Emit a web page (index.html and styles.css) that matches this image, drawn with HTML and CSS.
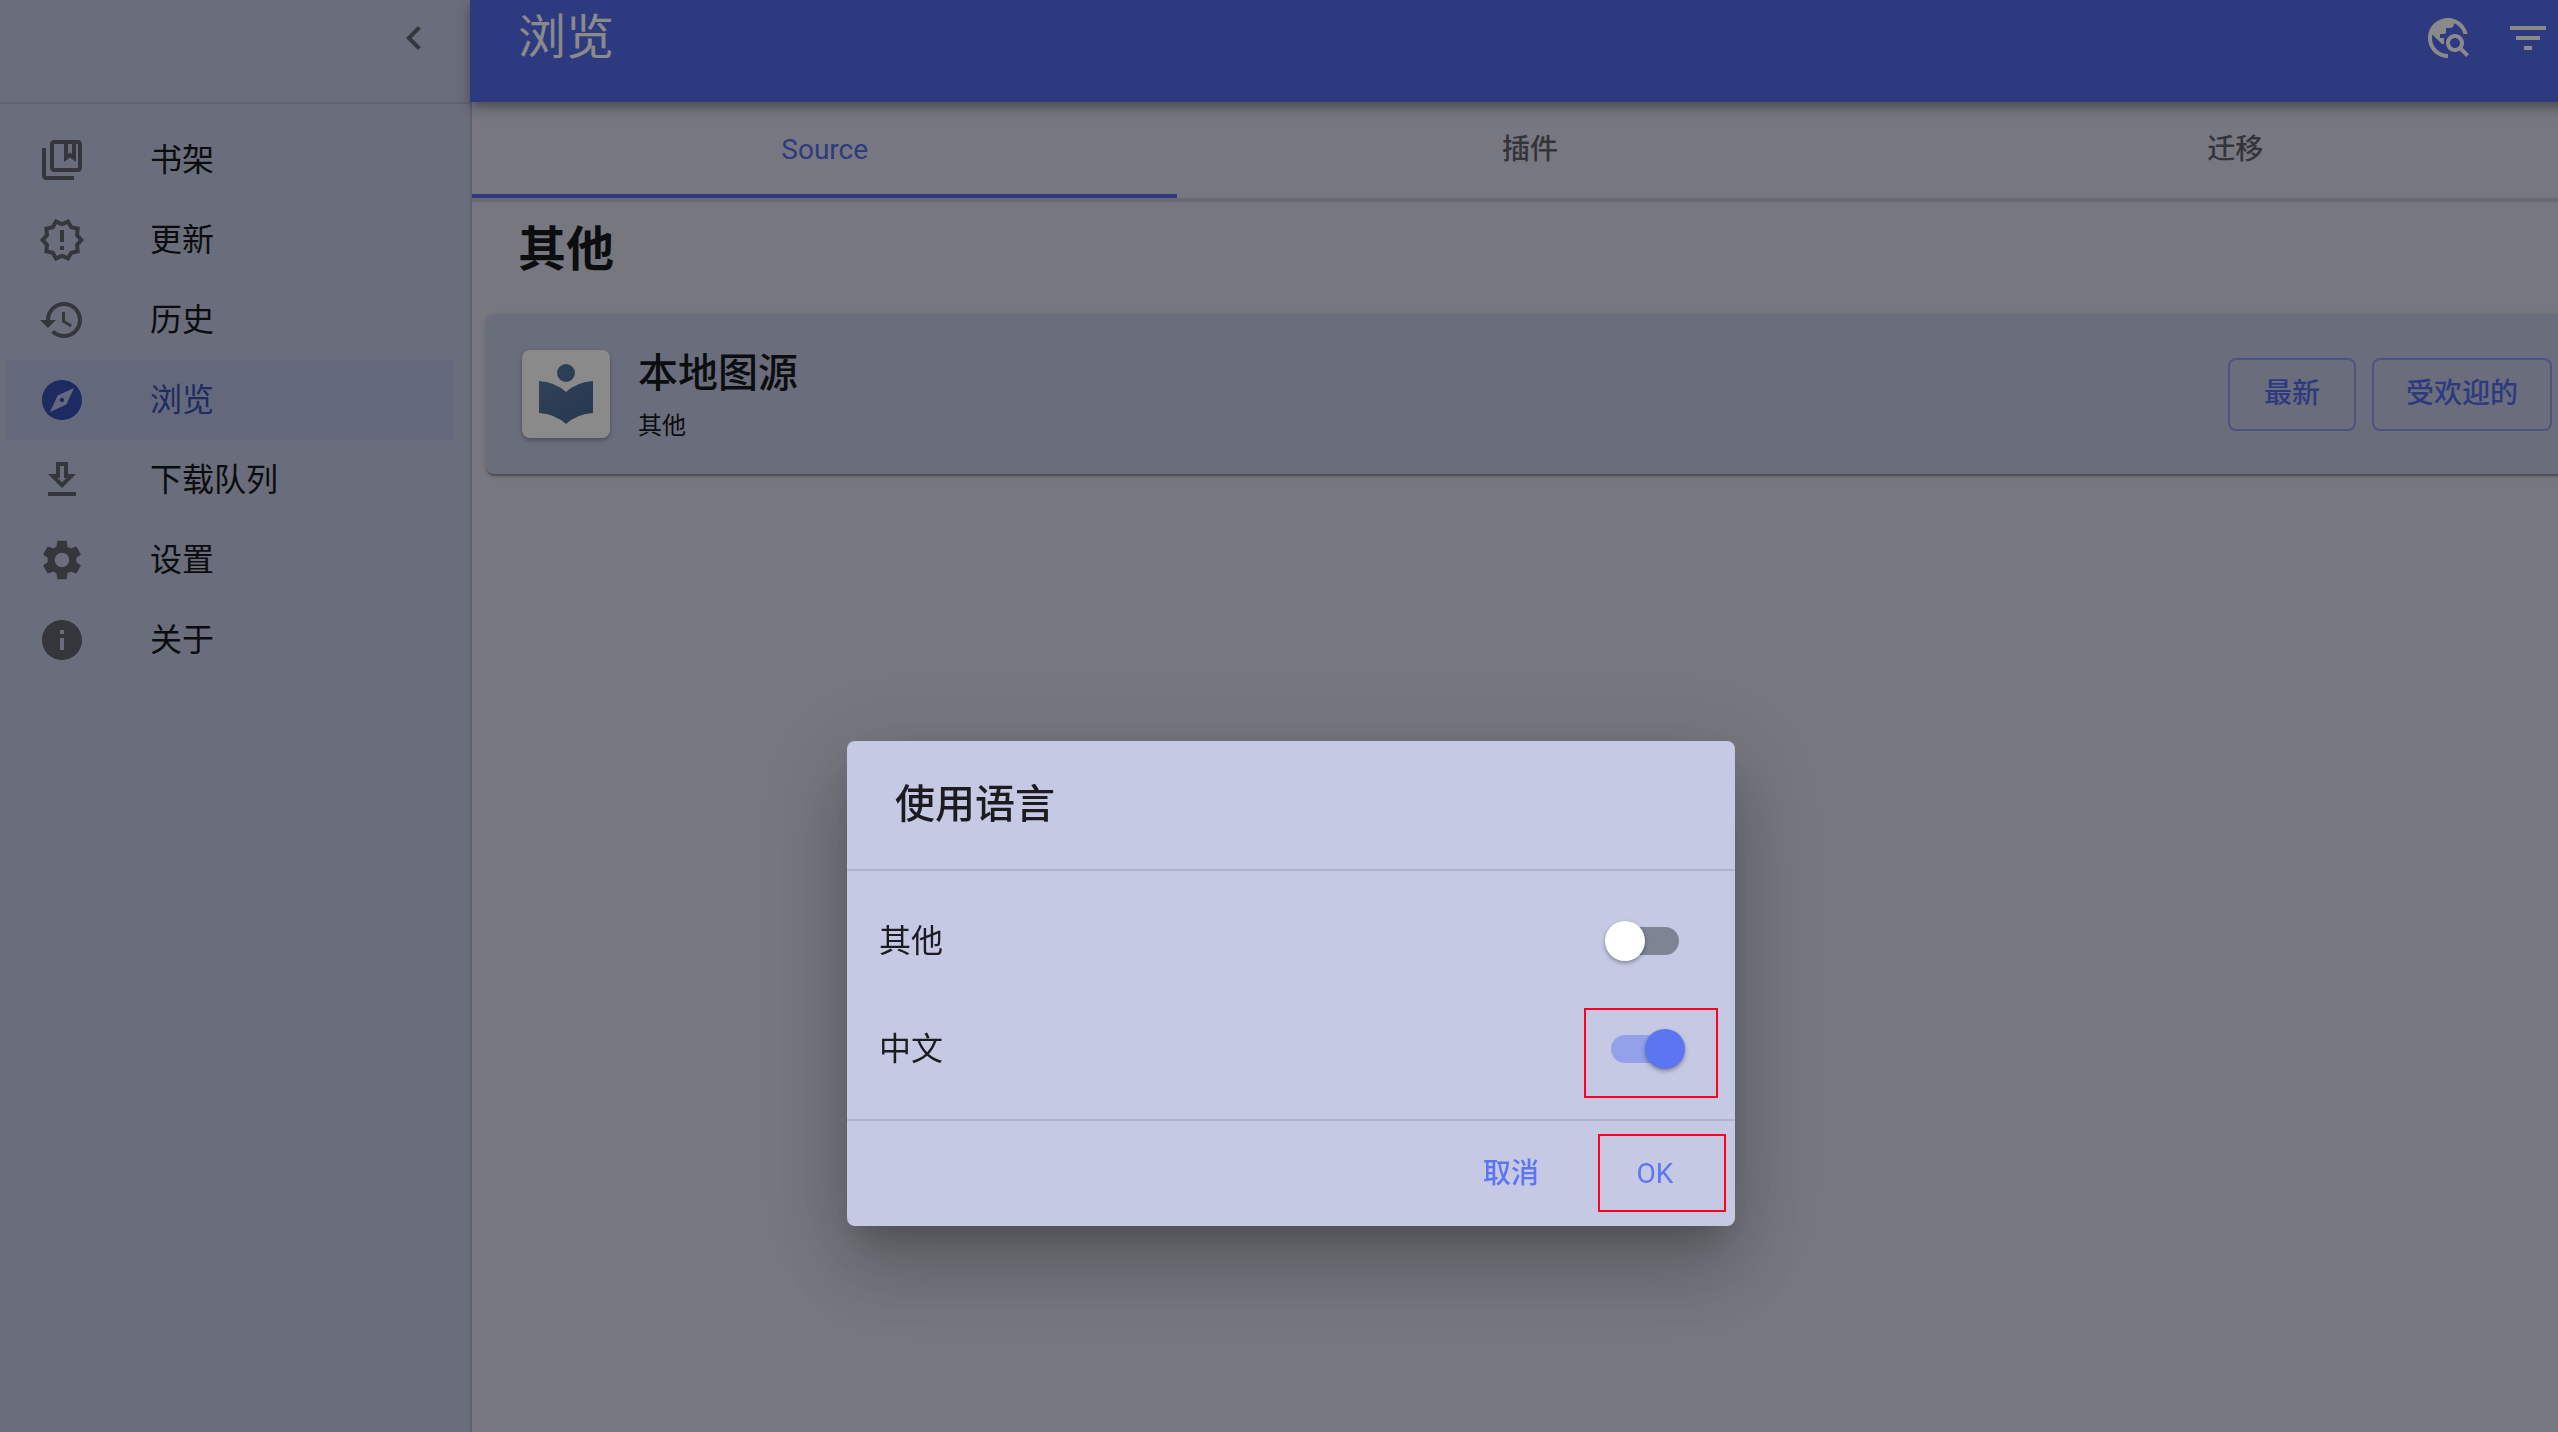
FILE: index.html
```html
<!DOCTYPE html>
<html lang="zh-CN">
<head>
    <meta charset="UTF-8">
    <title>浏览</title>
    <link rel="stylesheet" href="styles.css">
</head>
<body>
<div class="app">
    <aside class="sidebar">
        <div class="sidebar-header">
            <button type="button" class="icon-button" aria-label="收起">
                <svg class="icon" viewBox="0 0 24 24"><path d="M15.41 7.41 14 6l-6 6 6 6 1.41-1.41L10.83 12z"/></svg>
            </button>
        </div>
        <nav class="menu">
            <a href="#library" class="menu-item">
                <svg class="icon" viewBox="0 0 24 24"><path fill-rule="evenodd" d="M4 6H2v14c0 1.1.9 2 2 2h14v-2H4V6zM20 2H8c-1.1 0-2 .9-2 2v12c0 1.1.9 2 2 2h12c1.1 0 2-.9 2-2V4c0-1.1-.9-2-2-2zM20 16H8V4h5v9l3-2.25L19 13V4h1v12zM15 4h2v5l-1-.75L15 9V4z"/></svg>
                <span>书架</span>
            </a>
            <a href="#updates" class="menu-item">
                <svg class="icon" viewBox="0 0 24 24"><path d="M23 12l-2.44-2.78.34-3.68-3.61-.82-1.89-3.18L12 3 8.6 1.54 6.71 4.72l-3.61.81.34 3.68L1 12l2.44 2.78-.34 3.69 3.61.82 1.89 3.18L12 21l3.4 1.46 1.89-3.18 3.61-.82-.34-3.68L23 12zm-4.51 2.11l.26 2.79-2.74.62-1.43 2.41L12 18.82l-2.58 1.11-1.43-2.41-2.74-.62.26-2.8L3.66 12l1.85-2.12-.26-2.78 2.74-.61 1.43-2.41L12 5.18l2.58-1.11 1.43 2.41 2.74.62-.26 2.79L20.34 12l-1.85 2.11zM11 15h2v2h-2zm0-8h2v6h-2z" fill-rule="evenodd"/></svg>
                <span>更新</span>
            </a>
            <a href="#history" class="menu-item">
                <svg class="icon" viewBox="0 0 24 24"><path d="M13 3c-4.97 0-9 4.03-9 9H1l3.89 3.89.07.14L9 12H6c0-3.87 3.13-7 7-7s7 3.13 7 7-3.13 7-7 7c-1.93 0-3.68-.79-4.94-2.06l-1.42 1.42C8.27 19.99 10.51 21 13 21c4.97 0 9-4.03 9-9s-4.03-9-9-9zm-1 5v5l4.28 2.54.72-1.21-3.5-2.08V8H12z"/></svg>
                <span>历史</span>
            </a>
            <a href="#browse" class="menu-item selected">
                <svg class="icon" viewBox="0 0 24 24"><path d="M12 10.9c-.61 0-1.1.49-1.1 1.1s.49 1.1 1.1 1.1c.61 0 1.1-.49 1.1-1.1s-.49-1.1-1.1-1.1zM12 2C6.48 2 2 6.48 2 12s4.48 10 10 10 10-4.48 10-10S17.52 2 12 2zm2.19 12.19L6 18l3.81-8.19L18 6l-3.81 8.19z"/></svg>
                <span>浏览</span>
            </a>
            <a href="#downloads" class="menu-item">
                <svg class="icon" viewBox="0 0 24 24"><path d="M19 9h-4V3H9v6H5l7 7 7-7zm-8 2V5h2v6h1.17L12 13.17 9.83 11H11zm-6 7h14v2H5z"/></svg>
                <span>下载队列</span>
            </a>
            <a href="#settings" class="menu-item">
                <svg class="icon" viewBox="0 0 24 24"><path d="M19.14 12.94c.04-.3.06-.61.06-.94 0-.32-.02-.64-.07-.94l2.03-1.58c.18-.14.23-.41.12-.61l-1.92-3.32c-.12-.22-.37-.29-.59-.22l-2.39.96c-.5-.38-1.03-.7-1.62-.94l-.36-2.54c-.04-.24-.24-.41-.48-.41h-3.84c-.24 0-.43.17-.47.41l-.36 2.54c-.59.24-1.13.57-1.62.94l-2.39-.96c-.22-.08-.47 0-.59.22L2.74 8.87c-.12.21-.08.47.12.61l2.03 1.58c-.05.3-.09.63-.09.94s.02.64.07.94l-2.03 1.58c-.18.14-.23.41-.12.61l1.92 3.32c.12.22.37.29.59.22l2.39-.96c.5.38 1.03.7 1.62.94l.36 2.54c.05.24.24.41.48.41h3.84c.24 0 .44-.17.47-.41l.36-2.54c.59-.24 1.13-.56 1.62-.94l2.39.96c.22.08.47 0 .59-.22l1.92-3.32c.12-.22.07-.47-.12-.61l-2.01-1.58zM12 15.6c-1.98 0-3.6-1.62-3.6-3.6s1.62-3.6 3.6-3.6 3.6 1.62 3.6 3.6-1.62 3.6-3.6 3.6z"/></svg>
                <span>设置</span>
            </a>
            <a href="#about" class="menu-item">
                <svg class="icon" viewBox="0 0 24 24"><path d="M12 2C6.48 2 2 6.48 2 12s4.48 10 10 10 10-4.48 10-10S17.52 2 12 2zm1 15h-2v-6h2v6zm0-8h-2V7h2v2z"/></svg>
                <span>关于</span>
            </a>
        </nav>
    </aside>

    <main class="main">
        <header class="appbar">
            <h1 class="appbar-title">浏览</h1>
            <button type="button" class="icon-button" aria-label="全局搜索">
                <svg class="icon" viewBox="0 0 24 24"><path d="M19.3 16.9c.4-.7.7-1.5.7-2.4 0-2.5-2-4.5-4.5-4.5S11 12 11 14.5s2 4.5 4.5 4.5c.9 0 1.7-.3 2.4-.7l3.2 3.2 1.4-1.4-3.2-3.2zm-3.8.1c-1.4 0-2.5-1.1-2.5-2.5s1.1-2.5 2.5-2.5 2.5 1.1 2.5 2.5-1.1 2.5-2.5 2.5zM12 20v2C6.48 22 2 17.52 2 12S6.48 2 12 2c4.84 0 8.87 3.44 9.8 8h-2.07c-.64-2.46-2.4-4.47-4.73-5.41V5c0 1.1-.9 2-2 2h-2v2c0 .55-.45 1-1 1H8v2h2v3H9l-4.79-4.79C4.08 10.79 4 11.38 4 12c0 4.41 3.59 8 8 8z"/></svg>
            </button>
            <button type="button" class="icon-button" aria-label="筛选">
                <svg class="icon" viewBox="0 0 24 24"><path d="M10 18h4v-2h-4v2zM3 6v2h18V6H3zm3 7h12v-2H6v2z"/></svg>
            </button>
        </header>

        <div class="tabs">
            <button type="button" class="tab active">Source</button>
            <button type="button" class="tab">插件</button>
            <button type="button" class="tab">迁移</button>
        </div>

        <h2 class="group-title">其他</h2>
        <article class="card">
            <svg class="avatar" viewBox="0 0 88 88">
                <defs>
                    <linearGradient id="book" x1="0" y1="0" x2="1" y2="1">
                        <stop offset="0" stop-color="#587ba4"/>
                        <stop offset="1" stop-color="#466691"/>
                    </linearGradient>
                </defs>
                <circle cx="44" cy="23" r="9" fill="#53759e"/>
                <path fill="url(#book)" d="M17 31Q33 32 44 42Q55 32 71 31V63Q55 64 44 74Q33 64 17 63Z"/>
            </svg>
            <div class="card-text">
                <h3 class="card-title">本地图源</h3>
                <span class="card-lang">其他</span>
            </div>
            <button type="button" class="button outlined">最新</button>
            <button type="button" class="button outlined">受欢迎的</button>
        </article>
    </main>
</div>

<div class="backdrop">
    <div class="dialog" role="dialog" aria-labelledby="dialog-title">
        <h2 class="dialog-title" id="dialog-title">使用语言</h2>
        <div class="dialog-content">
            <div class="lang-row">
                <label for="lang-other">其他</label>
                <input type="checkbox" class="switch" id="lang-other">
            </div>
            <div class="lang-row">
                <label for="lang-zh">中文</label>
                <input type="checkbox" class="switch" id="lang-zh" checked>
            </div>
        </div>
        <div class="dialog-actions">
            <button type="button" class="button">取消</button>
            <button type="button" class="button">OK</button>
        </div>
        <span class="mark mark-switch"></span>
        <span class="mark mark-ok"></span>
    </div>
</div>
</body>
</html>
```

FILE: styles.css
```css
* {
    box-sizing: border-box;
}
html, body {
    height: 100%;
}
body {
    margin: 0;
    overflow: hidden;
    background-color: #dcdcec;
    color: #16181c;
    font-family: Roboto, "Noto Sans CJK SC", sans-serif;
    font-size: 32px;
    line-height: 48px;
}
h1, h2, h3 {
    margin: 0;
}
button {
    padding: 0;
    border: none;
    background: none;
    color: inherit;
    font-family: inherit;
    line-height: inherit;
}
.app {
    display: flex;
    min-height: 100%;
}
.icon {
    display: block;
    width: 48px;
    height: 48px;
    flex: none;
    fill: currentColor;
}

/* sidebar */
.sidebar {
    width: 472px;
    flex: none;
    border-right: 2px solid #b0b3cc;
    background-color: #c5c9e4;
}
.sidebar-header {
    display: flex;
    justify-content: flex-end;
    height: 104px;
    padding: 14px 32px;
    border-bottom: 2px solid #b0b3cc;
    color: #62646f;
}
.sidebar-header .icon-button {
    height: 48px;
}
.menu {
    padding: 16px 16px 16px 6px;
}
.menu-item {
    display: flex;
    align-items: center;
    gap: 64px;
    height: 80px;
    padding-left: 32px;
    color: #14171a;
    text-decoration: none;
}
.menu-item .icon {
    color: #62646f;
}
.menu-item.selected,
.menu-item.selected .icon {
    color: #3850b6;
}
.menu-item.selected {
    background-color: #bac1e4;
}

/* main area, runs a little past the right edge of the window */
.main {
    flex: 1;
    min-width: 0;
    margin-right: -30px;
}
.appbar {
    position: relative;
    display: flex;
    align-items: center;
    gap: 32px;
    height: 102px;
    margin-left: -2px;
    padding: 0 36px 26px 48px;
    background-color: #556bed;
    color: #fff;
    box-shadow: 0 4px 8px -2px rgba(0,0,0,.2), 0 8px 10px rgba(0,0,0,.14), 0 2px 20px rgba(0,0,0,.12);
}
.appbar-title {
    flex: 1;
    font-size: 48px;
    font-weight: 400;
    line-height: 76px;
}
.tabs {
    display: flex;
    border-bottom: 4px solid #c4c4d6;
}
.tab {
    flex: 1;
    height: 96px;
    border-top: 4px solid transparent;
    border-bottom: 4px solid transparent;
    color: #616168;
    font-size: 28px;
    font-weight: 500;
}
.tab.active {
    border-bottom-color: #556bed;
    color: #556bed;
    font-weight: 400;
}
.group-title {
    padding: 20px 46px 36px;
    font-size: 48px;
    font-weight: 700;
    line-height: 56px;
}
.card {
    display: flex;
    align-items: center;
    gap: 16px;
    margin-left: 14px;
    padding: 24px 36px;
    border-radius: 8px;
    background-color: #c5c9e4;
    box-shadow: 0 4px 2px -2px rgba(0,0,0,.2), 0 2px 2px rgba(0,0,0,.14), 0 2px 6px rgba(0,0,0,.12);
}
.avatar {
    width: 88px;
    height: 88px;
    border-radius: 8px;
    background-color: #fff;
    box-shadow: 0 2px 4px rgba(0,0,0,.3);
}
.card-text {
    flex: 1;
    padding: 0 0 8px 12px;
}
.card-title {
    font-size: 40px;
    font-weight: 500;
    line-height: 72px;
}
.card-lang {
    display: block;
    font-size: 24px;
    line-height: 32px;
}

/* buttons */
.button {
    min-width: 128px;
    height: 73px;
    padding: 0 16px;
    border-radius: 8px;
    color: #5c75f0;
    font-size: 28px;
    font-weight: 500;
}
.button.outlined {
    padding: 0 32px;
    border: 2px solid #8d9be8;
    color: #556bed;
}

/* dialog */
.backdrop {
    position: fixed;
    inset: 0;
    display: flex;
    justify-content: center;
    align-items: flex-start;
    padding: 741px 0 0 24px;
    background-color: rgba(0,0,0,.46);
}
.dialog {
    position: relative;
    width: 888px;
    border-radius: 8px;
    background-color: #c5c9e4;
    color: #1b1b20;
    box-shadow: 0 22px 30px -14px rgba(0,0,0,.2), 0 48px 76px 6px rgba(0,0,0,.14), 0 18px 92px 16px rgba(0,0,0,.12);
}
.dialog-title {
    padding: 32px 48px;
    font-size: 40px;
    font-weight: 500;
    line-height: 64px;
}
.dialog-content {
    padding: 16px 32px;
    border-top: 2px solid #aeb3ce;
    border-bottom: 2px solid #aeb3ce;
}
.lang-row {
    display: flex;
    align-items: center;
    justify-content: space-between;
    height: 108px;
}
.switch {
    position: relative;
    width: 68px;
    height: 28px;
    margin: 0 24px 0 0;
    border-radius: 14px;
    background-color: #7f8494;
    appearance: none;
}
.switch::before {
    content: "";
    position: absolute;
    top: -6px;
    left: -6px;
    width: 40px;
    height: 40px;
    border-radius: 50%;
    background-color: #fff;
    box-shadow: 0 2px 4px rgba(0,0,0,.35);
}
.switch:checked {
    background-color: #93a1ea;
}
.switch:checked::before {
    left: 34px;
    background-color: #5c75f0;
}
.dialog-actions {
    display: flex;
    justify-content: flex-end;
    gap: 16px;
    padding: 16px;
}
.dialog-actions .button:last-child {
    font-weight: 400;
}

/* red frames that point out the controls */
.mark {
    position: absolute;
    border: 2px solid #ff001e;
    pointer-events: none;
}
.mark-switch {
    top: 267px;
    right: 17px;
    width: 134px;
    height: 90px;
}
.mark-ok {
    top: 393px;
    right: 9px;
    width: 128px;
    height: 78px;
}
```
